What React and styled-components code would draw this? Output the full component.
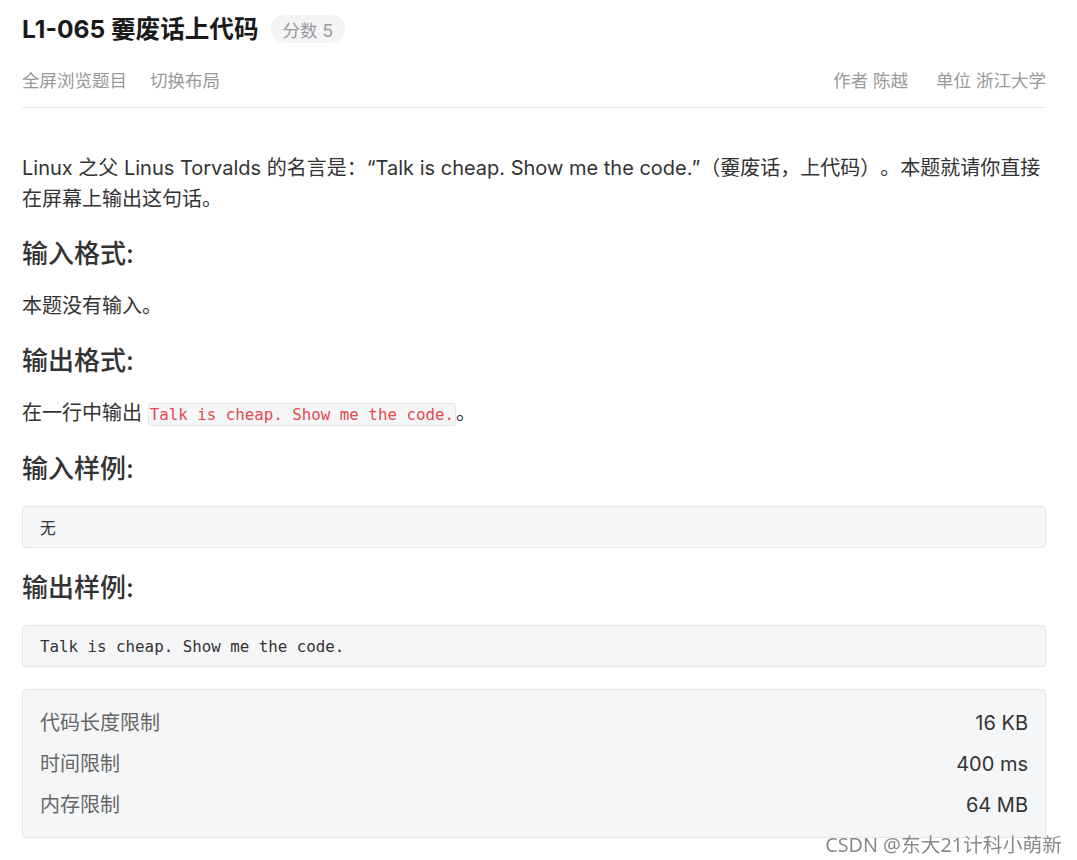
import styled, { createGlobalStyle } from "styled-components";

const GlobalStyle = createGlobalStyle`
  html, body {
    margin: 0;
    padding: 0;
    background: #ffffff;
  }
  body {
    font-family: "Inter", "Noto Sans CJK SC", sans-serif;
    color: #333333;
    text-spacing-trim: space-all;
  }
`;

const limits = [
  { label: "代码长度限制", value: "16 KB" },
  { label: "时间限制", value: "400 ms" },
  { label: "内存限制", value: "64 MB" },
];

const App = () => {
  return (
    <>
      <GlobalStyle />
      <Page>
        <TitleRow>
          <Title>L1-065 嫑废话上代码</Title>
          <Score>分数 5</Score>
        </TitleRow>
        <Toolbar>
          <ToolGroup $gap={23}>
            <ToolItem>全屏浏览题目</ToolItem>
            <ToolItem>切换布局</ToolItem>
          </ToolGroup>
          <ToolGroup $gap={28}>
            <ToolItem>作者 陈越</ToolItem>
            <ToolItem>单位 浙江大学</ToolItem>
          </ToolGroup>
        </Toolbar>

        <Content>
          <Paragraph>
            Linux 之父 Linus Torvalds 的名言是：“Talk is cheap. Show me the code.”（嫑废话，上代码）。本题就请你直接在屏幕上输出这句话。
          </Paragraph>

          <Heading>输入格式:</Heading>
          <Paragraph>本题没有输入。</Paragraph>

          <Heading>输出格式:</Heading>
          <Paragraph>
            在一行中输出 <InlineCode>Talk is cheap. Show me the code.</InlineCode>。
          </Paragraph>

          <Heading>输入样例:</Heading>
          <CodeBlock>无</CodeBlock>

          <Heading>输出样例:</Heading>
          <CodeBlock>Talk is cheap. Show me the code.</CodeBlock>

          <LimitBox>
            {limits.map((l) => (
              <LimitRow key={l.label}>
                <LimitLabel>{l.label}</LimitLabel>
                <LimitValue>{l.value}</LimitValue>
              </LimitRow>
            ))}
          </LimitBox>
        </Content>
      </Page>
      <Watermark>CSDN @东大21计科小萌新</Watermark>
    </>
  );
};

export default App;

const Page = styled.div`
  width: 1024px;
  padding: 13px 31px 20px 22px;
`;

const TitleRow = styled.div`
  display: flex;
  align-items: center;
  gap: 12px;
  height: 32px;
`;

const Title = styled.h1`
  margin: 0;
  font-size: 24.6px;
  font-weight: 700;
  color: #1a1a1a;
  line-height: 32px;
`;

const Score = styled.span`
  display: inline-flex;
  align-items: center;
  height: 28px;
  padding: 0 12px;
  border-radius: 14px;
  background: #f3f4f6;
  color: #9a9a9a;
  font-size: 17.5px;
`;

const Toolbar = styled.div`
  display: flex;
  justify-content: space-between;
  align-items: center;
  margin-top: 24px;
  padding-bottom: 14px;
  border-bottom: 1px solid #e8e8ec;
`;

const ToolGroup = styled.div`
  display: flex;
  gap: ${(p) => p.$gap}px;
`;

const ToolItem = styled.span`
  font-size: 17.5px;
  color: #999999;
  line-height: 24px;
`;

const Content = styled.div`
  padding-top: 45px;
`;

const Paragraph = styled.p`
  margin: 0 0 21px;
  font-size: 20px;
  line-height: 31px;
  color: #333333;
`;

const Heading = styled.h2`
  margin: 0 0 19px;
  font-size: 26px;
  font-weight: 500;
  line-height: 36px;
  color: #333333;
`;

const InlineCode = styled.code`
  font-family: "DejaVu Sans Mono", monospace;
  font-size: 15.8px;
  color: #e5484d;
  background: #f5f6f8;
  border: 1px solid #e3e5e8;
  border-radius: 3px;
  padding: 1px 1px;
`;

const CodeBlock = styled.pre`
  margin: 0 0 22px;
  height: 42px;
  box-sizing: border-box;
  display: flex;
  align-items: center;
  padding: 0 17px;
  background: #f5f6f8;
  border: 1px solid #e3e5e8;
  border-radius: 4px;
  font-family: "DejaVu Sans Mono", "Noto Sans CJK SC", monospace;
  font-size: 15.8px;
  color: #333333;
`;

const LimitBox = styled.div`
  display: flex;
  flex-direction: column;
  gap: 9px;
  padding: 17px 17px 16px;
  background: #f5f6f8;
  border: 1px solid #e3e5e8;
  border-radius: 4px;
`;

const LimitRow = styled.div`
  display: flex;
  justify-content: space-between;
  align-items: center;
  line-height: 32px;
  font-size: 20px;
`;

const LimitLabel = styled.span`
  color: #666666;
`;

const LimitValue = styled.span`
  color: #333333;
`;

const Watermark = styled.div`
  position: fixed;
  right: 15px;
  top: 829px;
  font-size: 19.8px;
  color: #8a8a8a;
  text-shadow: 0 0 2px #ffffff;
  font-family: "Noto Sans", "Noto Sans CJK SC", sans-serif;
`;
